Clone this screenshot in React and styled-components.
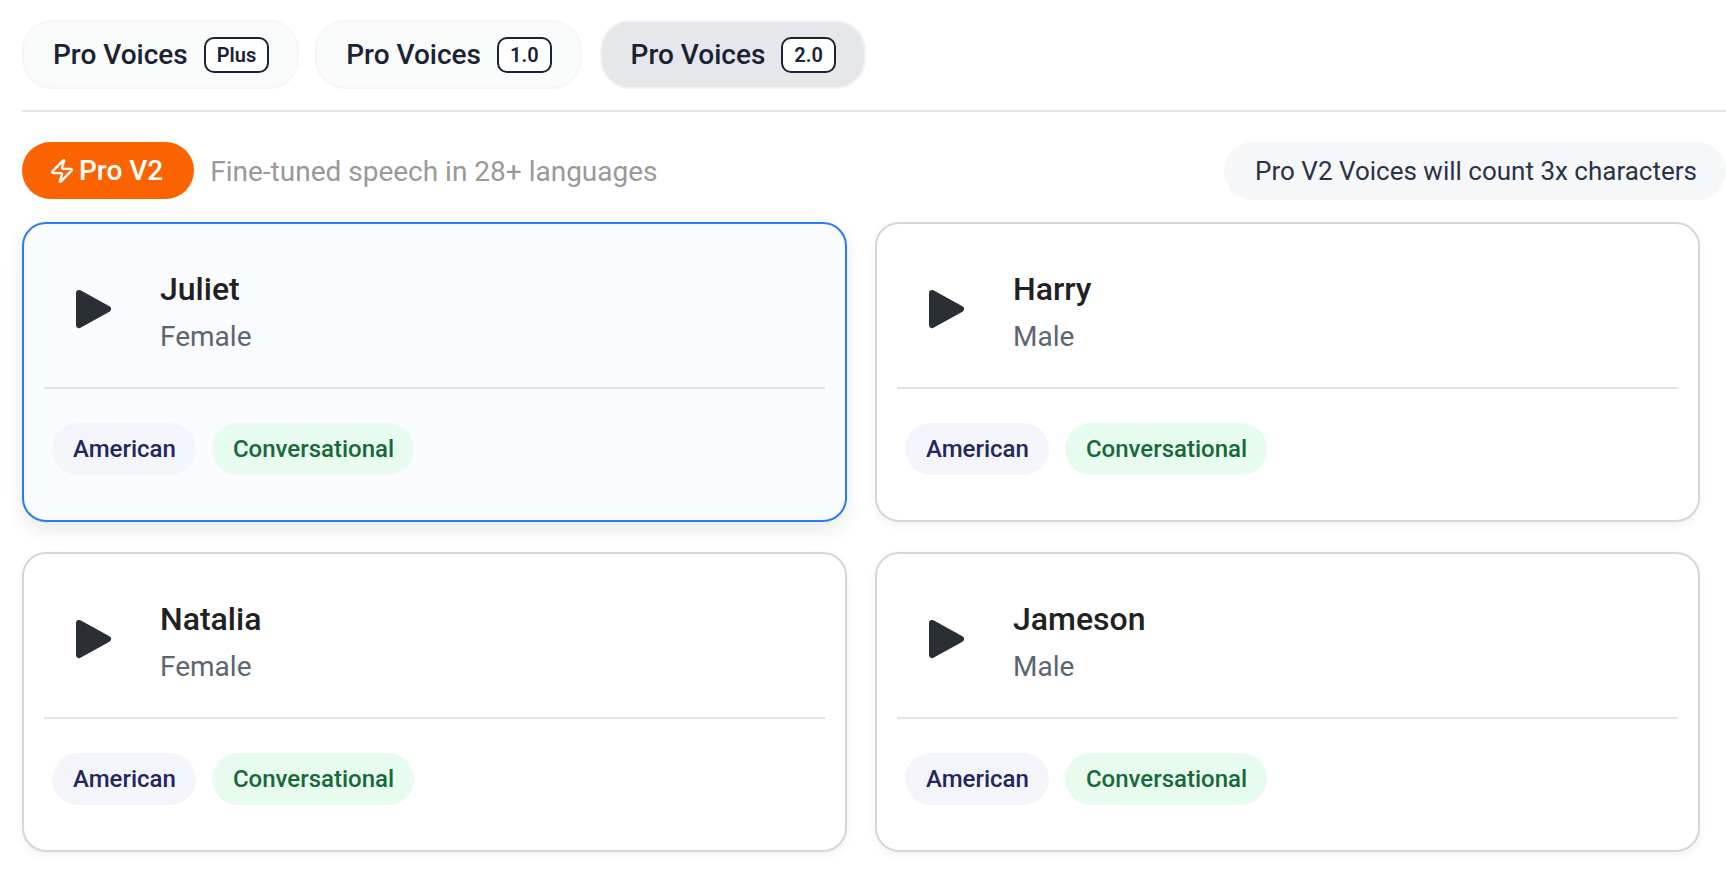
import React from 'react'
import styled, { createGlobalStyle } from 'styled-components'
import { Zap } from 'lucide-react'

const GlobalStyle = createGlobalStyle`
  html, body {
    margin: 0;
    background: #fff;
    overflow: hidden;
  }
  body {
    font-family: Roboto, "Liberation Sans", sans-serif;
  }
`

const Page = styled.div`
  width: 1726px;
  height: 876px;
  box-sizing: border-box;
  padding: 20px 0 0 22px;
`

const TabRow = styled.div`
  display: flex;
  gap: 16px;
  padding-bottom: 21px;
  border-bottom: 2px solid #e2e5e9;
`

const Tab = styled.div`
  display: flex;
  align-items: center;
  gap: 16px;
  height: 69px;
  box-sizing: border-box;
  margin-left: ${props => (props.$active ? '2px' : '0')};
  padding: 0 28px 0 29px;
  border: 2px solid ${props => (props.$active ? '#f2f3f4' : '#f6f6f7')};
  border-radius: 30px;
  background: ${props => (props.$active ? '#e5e7ea' : '#f9fafa')};
`

const TabLabel = styled.span`
  font-size: 28px;
  font-weight: 500;
  color: #1a2333;
`

const VersionBadge = styled.span`
  display: flex;
  align-items: center;
  justify-content: center;
  height: 36px;
  box-sizing: border-box;
  padding: 0 11px;
  border: 2px solid #1a2333;
  border-radius: 10px;
  background: #fff;
  font-size: 20px;
  font-weight: 600;
  color: #1a2333;
`

const InfoRow = styled.div`
  display: flex;
  align-items: center;
  height: 58px;
  margin-top: 30px;
`

const ProBadge = styled.div`
  display: flex;
  align-items: center;
  align-self: flex-start;
  gap: 4px;
  height: 57px;
  box-sizing: border-box;
  padding: 0 31px 0 27px;
  border-radius: 29px;
  background: #fb6400;
  font-size: 28px;
  font-weight: 500;
  color: #fff;
`

const Subtitle = styled.span`
  margin-left: 16px;
  font-size: 28px;
  color: #999;
`

const Notice = styled.div`
  display: flex;
  align-items: center;
  height: 58px;
  box-sizing: border-box;
  margin-left: auto;
  padding: 0 29px 0 31px;
  border-radius: 29px;
  background: #f6f7f9;
  font-size: 26px;
  color: #2a3345;
`

const CardGrid = styled.div`
  display: grid;
  grid-template-columns: 825px 825px;
  gap: 30px 28px;
  margin-top: 22px;
`

const Card = styled.div`
  height: 300px;
  box-sizing: border-box;
  padding: 6px 20px 0;
  border: 2px solid ${props => (props.$selected ? '#2a7af5' : '#d6d6d6')};
  border-radius: 24px;
  background: ${props => (props.$selected ? '#fafbff' : '#fff')};
  box-shadow: ${props => (props.$selected
    ? '0 8px 20px rgba(0, 0, 0, 0.09)'
    : '0 3px 8px rgba(0, 0, 0, 0.06)')};
`

const CardHead = styled.div`
  display: flex;
  align-items: center;
  height: 157px;
  padding-left: 31px;
  border-bottom: 2px solid #e1e3e6;
`

const PlayIcon = styled.svg`
  width: 37px;
  height: 40px;
  margin-right: 48px;
  flex-shrink: 0;
`

const VoiceInfo = styled.div`
  display: flex;
  flex-direction: column;
  gap: 8px;
  padding-top: 9px;
`

const VoiceName = styled.div`
  font-size: 32px;
  line-height: 40px;
  font-weight: 500;
  color: #212121;
`

const VoiceGender = styled.div`
  font-size: 28px;
  line-height: 40px;
  color: #5c6670;
`

const TagRow = styled.div`
  display: flex;
  gap: 16px;
  margin-top: 34px;
  padding-left: 8px;
`

const Tag = styled.span`
  display: flex;
  align-items: center;
  height: 52px;
  box-sizing: border-box;
  padding: 0 20px 0 21px;
  border-radius: 26px;
  background: ${props => (props.$green ? '#e8fbef' : '#f4f5fa')};
  font-size: 24px;
  font-weight: 500;
  color: ${props => (props.$green ? '#17693a' : '#23275e')};
`

const tabs = [
  { label: 'Pro Voices', badge: 'Plus' },
  { label: 'Pro Voices', badge: '1.0' },
  { label: 'Pro Voices', badge: '2.0', active: true },
]

const voices = [
  { name: 'Juliet', gender: 'Female', selected: true },
  { name: 'Harry', gender: 'Male' },
  { name: 'Natalia', gender: 'Female' },
  { name: 'Jameson', gender: 'Male' },
]

export default function App() {
  return (
    <Page>
      <GlobalStyle />
      <TabRow>
        {tabs.map(tab => (
          <Tab key={tab.badge} $active={tab.active}>
            <TabLabel>{tab.label}</TabLabel>
            <VersionBadge>{tab.badge}</VersionBadge>
          </Tab>
        ))}
      </TabRow>
      <InfoRow>
        <ProBadge>
          <Zap size={26} strokeWidth={2.2} />
          Pro V2
        </ProBadge>
        <Subtitle>Fine-tuned speech in 28+ languages</Subtitle>
        <Notice>Pro V2 Voices will count 3x characters</Notice>
      </InfoRow>
      <CardGrid>
        {voices.map(voice => (
          <Card key={voice.name} $selected={voice.selected}>
            <CardHead>
              <PlayIcon viewBox="0 0 37 40">
                <polygon
                  points="4,4 33,20 4,36"
                  fill="#2a2e35"
                  stroke="#2a2e35"
                  strokeWidth="6"
                  strokeLinejoin="round"
                />
              </PlayIcon>
              <VoiceInfo>
                <VoiceName>{voice.name}</VoiceName>
                <VoiceGender>{voice.gender}</VoiceGender>
              </VoiceInfo>
            </CardHead>
            <TagRow>
              <Tag>American</Tag>
              <Tag $green>Conversational</Tag>
            </TagRow>
          </Card>
        ))}
      </CardGrid>
    </Page>
  )
}
